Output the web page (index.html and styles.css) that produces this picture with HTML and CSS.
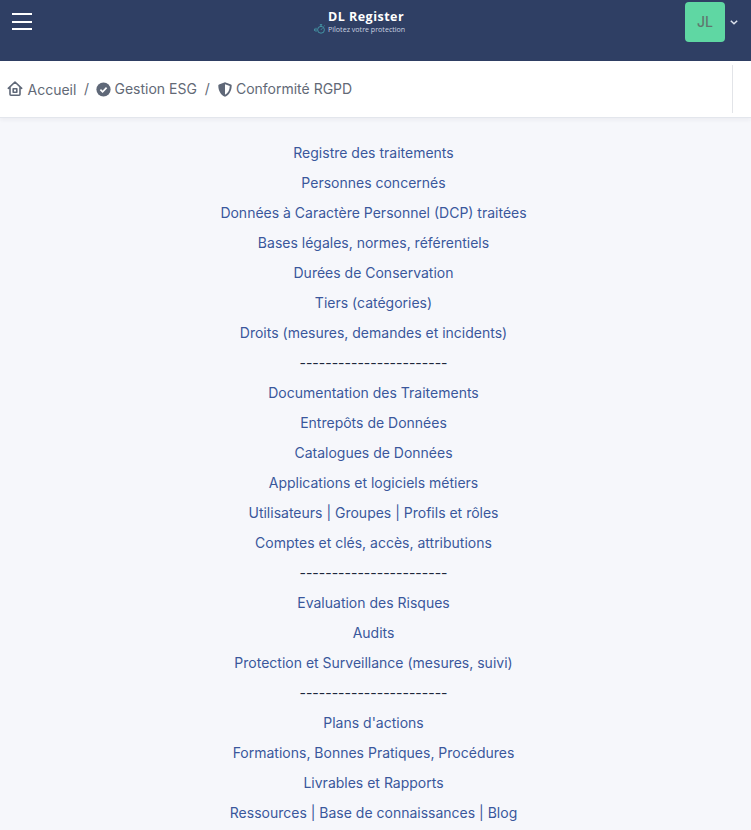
FILE: index.html
```html
<!DOCTYPE html>
<html lang="fr">
<head>
<meta charset="utf-8">
<title>DL Register</title>
<link rel="stylesheet" href="styles.css">
</head>
<body>
<header class="topbar">
  <button class="menu" aria-label="Menu"><span></span><span></span><span></span></button>
  <div class="brand">
    <div class="brand-name">DL Register</div>
    <div class="brand-tag">
      <svg width="12" height="10" viewBox="0 0 12 10" fill="none" stroke="#469eab" stroke-width=".9"><circle cx="7" cy="5.800" r="3.400"/><path d="M5.800 .7h2.400M7 .7v1.700M9.700 2.500l.9-.8M7 5.800l1.300-1.500M2 3.800v4M.6 4.700v2.200"/></svg>
      <span>Pilotez votre protection</span>
    </div>
  </div>
  <div class="user">
    <div class="avatar">JL</div>
    <svg width="8" height="6" viewBox="0 0 8 6" fill="none" stroke="#dde2ec" stroke-width="1.5"><path d="M.8 1.7 4 4.8 7.2 1.7"/></svg>
  </div>
</header>
<nav class="crumbs">
  <a class="crumb home"><svg width="16" height="16" viewBox="0 0 16 16" fill="none" stroke="#5f6878" stroke-width="1.6" stroke-linejoin="round" stroke-linecap="round"><path d="M1.300 7.300 8 1l6.700 6.300M3 6v7.300q0 .9.900.9h8.200q.9 0 .9-.9V6"/><rect x="6.200" y="7.700" width="3.600" height="3.600"/></svg><span>Accueil</span></a>
  <span class="slash">/</span>
  <a class="crumb"><svg width="15" height="15" viewBox="0 0 15 15"><circle cx="7.5" cy="7.5" r="7.1" fill="#5f6878"/><path d="m4.400 7.600 2.200 2.200 4-4.200" fill="none" stroke="#fff" stroke-width="1.7"/></svg><span>Gestion ESG</span></a>
  <span class="slash wide">/</span>
  <a class="crumb rgpd"><svg width="14" height="15" viewBox="0 0 14 15"><path fill="#5f6878" fill-rule="evenodd" d="M7 .3 13 2.500c.5.2.7.5.7 1C13.600 8.800 11.500 12.800 7 14.700 2.500 12.800.4 8.800.3 3.500c0-.5.2-.8.700-1zM7 2.300v10.400c3.200-1.600 4.700-4.600 4.800-8.600z"/></svg><span>Conformité RGPD</span></a>
  <div class="divider"></div>
</nav>
<main class="links">
  <p><a>Registre des traitements</a></p>
  <p><a>Personnes concernés</a></p>
  <p><a>Données à Caractère Personnel (DCP) traitées</a></p>
  <p><a>Bases légales, normes, référentiels</a></p>
  <p><a>Durées de Conservation</a></p>
  <p><a>Tiers (catégories)</a></p>
  <p><a>Droits (mesures, demandes et incidents)</a></p>
  <p>-----------------------</p>
  <p><a>Documentation des Traitements</a></p>
  <p><a>Entrepôts de Données</a></p>
  <p><a>Catalogues de Données</a></p>
  <p><a>Applications et logiciels métiers</a></p>
  <p><a>Utilisateurs | Groupes | Profils et rôles</a></p>
  <p><a>Comptes et clés, accès, attributions</a></p>
  <p>-----------------------</p>
  <p><a>Evaluation des Risques</a></p>
  <p><a>Audits</a></p>
  <p><a>Protection et Surveillance (mesures, suivi)</a></p>
  <p>-----------------------</p>
  <p><a>Plans d'actions</a></p>
  <p><a>Formations, Bonnes Pratiques, Procédures</a></p>
  <p><a>Livrables et Rapports</a></p>
  <p><a>Ressources | Base de connaissances | Blog</a></p>
</main>
</body>
</html>
```
FILE: styles.css
```css
* { box-sizing: border-box; }
body {
  margin: 0;
  height: 830px;
  overflow: hidden;
  background: #f6f7fb;
  color: #1d273b;
  font: 14px/20px Inter, "Liberation Sans", sans-serif;
}
.topbar {
  display: grid;
  grid-template-columns: 1fr auto 1fr;
  align-items: start;
  height: 61px;
  background: #2f3f64;
}
.menu {
  display: flex;
  flex-direction: column;
  justify-content: space-between;
  width: 20px;
  height: 17px;
  margin: 13px 0 0 12px;
  padding: 0;
  border: 0;
  background: none;
}
.menu span { height: 2px; background: #fff; }
.brand { width: 91px; margin: 10px 0 0 -32px; color: #fff; font-family: "Open Sans", sans-serif; white-space: nowrap; }
.brand-name { margin-left: 14px; font-size: 12.5px; line-height: 14px; font-weight: 700; letter-spacing: .48px; }
.brand-tag { display: flex; align-items: center; height: 10px; font-size: 7.1px; line-height: 10px; color: #c9d2e0; gap: 2px; }
.brand-tag svg { flex: none; }
.user { display: flex; align-items: center; justify-self: end; gap: 5px; margin: 2px 13px 0 0; }
.avatar {
  width: 40px;
  height: 40px;
  border-radius: 4px;
  background: #5fd7a3;
  color: #60776f;
  line-height: 40px;
  font-weight: 500;
  text-align: center;
}
.crumbs {
  display: flex;
  align-items: center;
  height: 57px;
  padding-left: 7px;
  border-bottom: 1px solid #e3e6ec;
  background: #fff;
  box-shadow: 0 2px 4px rgba(30, 40, 60, .05);
  color: #626976;
}
.crumb { display: flex; align-items: center; gap: 3px; }
.home { gap: 4.5px; }
.home span { padding-top: 2px; }
.slash { margin: 0 7.5px; }
.slash.wide { margin: 0 8px; }
.rgpd { gap: 4px; }
.divider { width: 1px; height: 48px; margin: 0 18px 0 auto; background: #e2e4e8; }
.links { padding: 20px 4px 0 0; text-align: center; }
.links p { margin: 0; height: 30px; line-height: 30px; }
.links a { color: #3a579c; }
```
